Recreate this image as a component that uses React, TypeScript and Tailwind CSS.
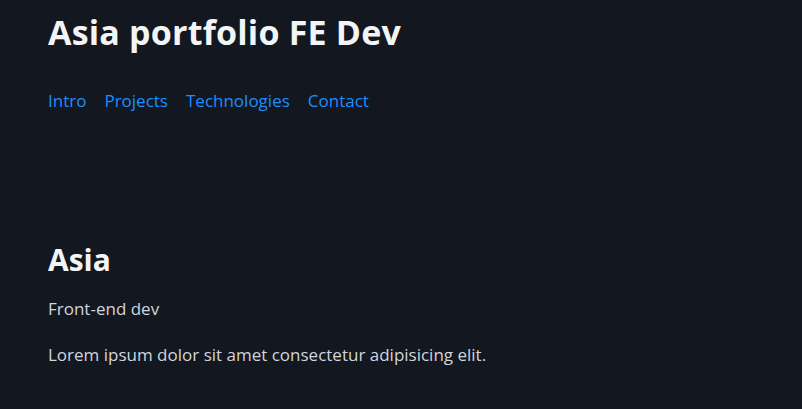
import React from "react";

const App = () => {
  return (
    <div className="min-h-screen bg-[#13171f] px-12 font-['Open_Sans',sans-serif]">
      <header>
        <h1 className="pt-[12px] text-[34px] font-bold leading-[40px] tracking-[0.2px] text-[#f3f4f6]">
          Asia portfolio FE Dev
        </h1>
        <nav className="mt-[37px] flex gap-[18px] text-[17px] leading-[24px] text-[#1a8fff]">
          <a href="#">Intro</a>
          <a href="#">Projects</a>
          <a href="#">Technologies</a>
          <a href="#">Contact</a>
        </nav>
      </header>

      <section className="mt-[128px]">
        <h2 className="text-[30px] font-bold leading-[38px] text-[#f3f4f6]">Asia</h2>
        <p className="mt-[18px] text-[17px] leading-[24px] text-[#d1d5db]">Front-end dev</p>
        <p className="mt-[22px] text-[17px] leading-[24px] text-[#d1d5db]">
          Lorem ipsum dolor sit amet consectetur adipisicing elit.
        </p>
      </section>
    </div>
  );
};

export default App;
